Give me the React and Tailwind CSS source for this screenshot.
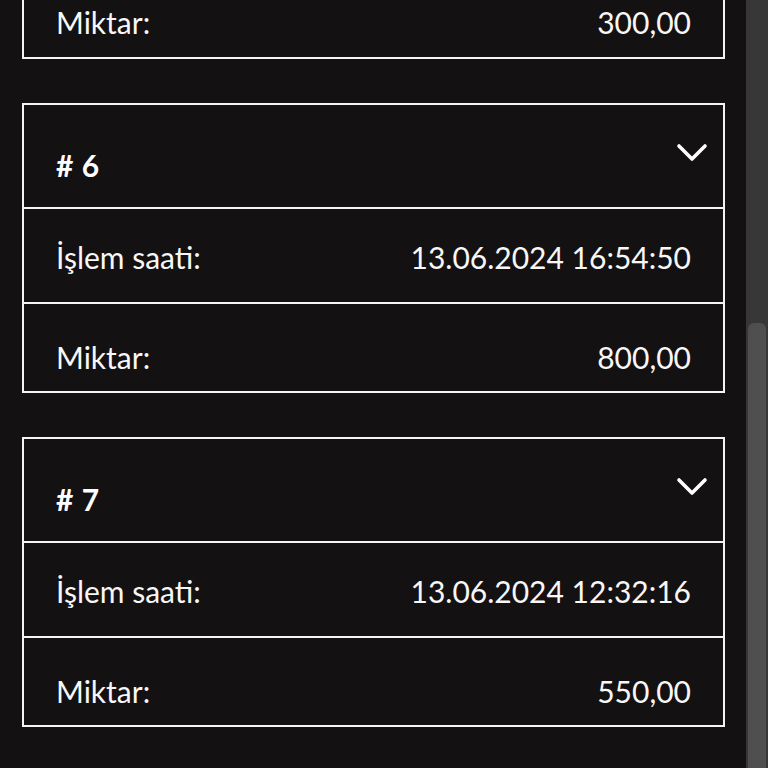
import React from "react";

const items = [
  { id: 6, time: "13.06.2024 16:54:50", amount: "800,00" },
  { id: 7, time: "13.06.2024 12:32:16", amount: "550,00" },
];

function Chevron() {
  return (
    <svg width="32" height="20" viewBox="0 0 32 20" fill="none">
      <polyline
        points="3,3 16,16 29,3"
        stroke="#ffffff"
        strokeWidth="3.6"
        strokeLinecap="round"
        strokeLinejoin="round"
      />
    </svg>
  );
}

function Card({ item }) {
  return (
    <div className="border-2 border-[#f4f4f4] bg-[#141112] flex flex-col">
      <div className="h-[102px] flex items-start justify-between pl-8 pr-[15px]">
        <div className="mt-[43px] text-[30px] leading-[34px] font-bold text-white tracking-[0.5px]">
          # {item.id}
        </div>
        <div className="mt-[38px]">
          <Chevron />
        </div>
      </div>
      <div className="h-[2px] bg-[#f4f4f4]" />
      <div className="h-[93px] flex items-start justify-between px-8 pt-[31px] text-[30px] leading-[34px] text-[#f7f7f7]">
        <span>İşlem saati:</span>
        <span>{item.time}</span>
      </div>
      <div className="h-[2px] bg-[#f4f4f4]" />
      <div className="h-[87px] flex items-start justify-between px-8 pt-[36px] text-[30px] leading-[34px] text-[#f7f7f7]">
        <span>Miktar:</span>
        <span>{item.amount}</span>
      </div>
    </div>
  );
}

export default function App() {
  return (
    <div
      className="w-[768px] h-[768px] overflow-hidden flex bg-[#141112]"
      style={{ fontFamily: "Lato, 'Noto Sans', sans-serif" }}
    >
      <div className="w-[746px] h-full overflow-hidden">
        <div className="pl-[22px] pr-[21px] flex flex-col gap-[44px]">
          <div className="h-[59px] border-x-2 border-b-2 border-[#f4f4f4] flex items-start justify-between px-8 pt-[5px] text-[30px] leading-[34px] text-[#f7f7f7]">
            <span>Miktar:</span>
            <span>300,00</span>
          </div>
          {items.map((it) => (
            <Card key={it.id} item={it} />
          ))}
        </div>
      </div>
      <div className="w-[22px] h-full bg-[#373737] flex flex-col pt-[323px] px-[2px]">
        <div className="flex-1 bg-[#4f4f4f] rounded-t-[6px]" />
      </div>
    </div>
  );
}
